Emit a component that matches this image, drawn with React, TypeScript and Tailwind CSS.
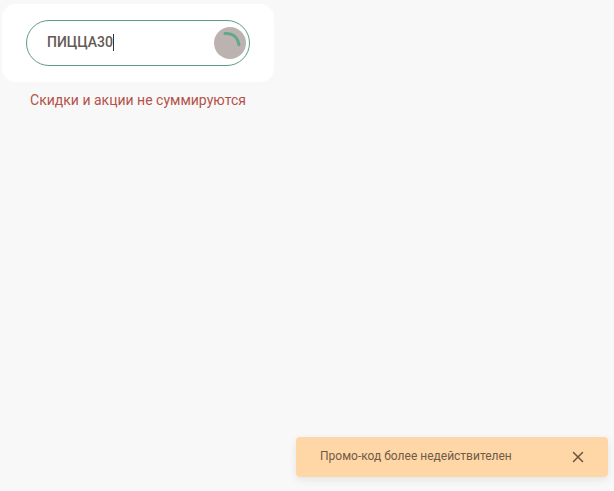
import { X } from 'lucide-react';

export default function App() {
  return (
    <div className="relative h-[491px] w-[614px] overflow-hidden bg-[#f8f8f8] font-['Roboto',sans-serif]">
      <div className="ml-[2px] w-[272px] pt-[4px]">
        {/* Promo card */}
        <div className="rounded-[14px] bg-white px-[24px] py-[16px]">
          <div className="flex h-[46px] w-[224px] items-center justify-between rounded-[23px] border border-[#5c9c84] pl-[20px] pr-[3px]">
            <div className="mb-[2px] flex items-center text-[14px] font-medium leading-[20px] text-[#645a56]">
              ПИЦЦА30
              <span className="h-[17px] w-px bg-[#333333]" />
            </div>
            <div className="flex h-[32px] w-[32px] items-center justify-center rounded-full bg-[#bcb3b1]">
              <svg width="32" height="32" viewBox="0 0 32 32" fill="none">
                <path d="M11 6.6 C17.5 5.4 23.6 9.5 25 17.8" stroke="#5fa98a" strokeWidth="3" strokeLinecap="round" />
              </svg>
            </div>
          </div>
        </div>
        <p className="mt-[8px] text-center text-[14px] leading-[20px] text-[#b5524a]">
          Скидки и акции не суммируются
        </p>
      </div>

      {/* Toast */}
      <div className="absolute left-[296px] top-[437px] flex h-[40px] w-[312px] items-center justify-between rounded-[4px] bg-[#ffd7a6] pl-[24px] pr-[21px] shadow-[0_3px_8px_rgba(0,0,0,0.08)]">
        <span className="mb-[2px] text-[12px] leading-[18px] text-[#6f5a48]">Промо-код более недействителен</span>
        <X size={18} strokeWidth={2} className="text-[#6b5443]" />
      </div>
    </div>
  );
}
